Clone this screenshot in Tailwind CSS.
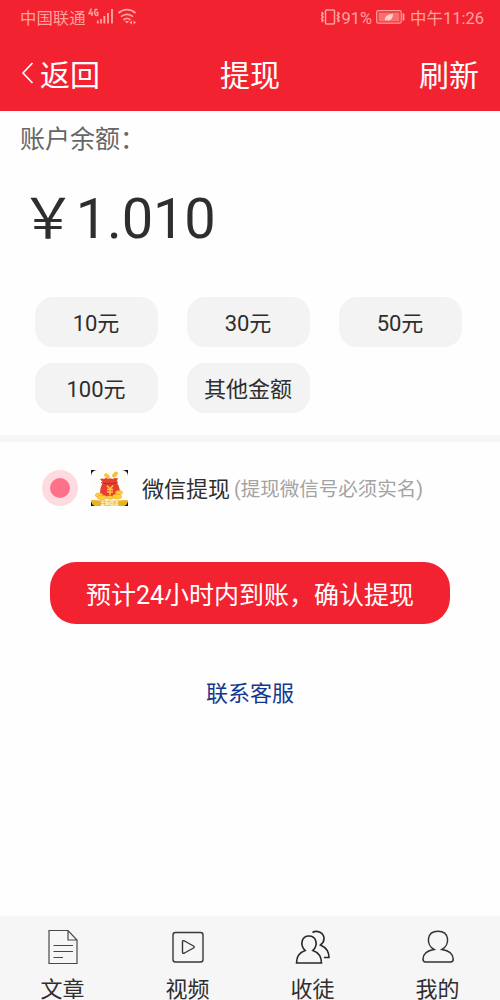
<!DOCTYPE html>
<html lang="zh-CN">
<head>
<meta charset="utf-8">
<meta name="viewport" content="width=device-width, initial-scale=1">
<title>提现</title>
<script src="https://cdn.jsdelivr.net/npm/@tailwindcss/browser@4"></script>
</head>
<body class="bg-[#fefefe] font-[Roboto,'Noto_Sans_CJK_SC',sans-serif] text-[#2e2e2e]">
<div class="flex h-[1000px] w-[500px] flex-col overflow-hidden whitespace-nowrap">
  <header class="h-[111px] shrink-0 bg-[#f32231] text-white">
    <div class="flex h-9 items-center pl-5 pr-4 text-base leading-9 text-[#ffa39d]">
      <span class="pt-px text-[16.4px]">中国联通</span>
      <svg class="ml-[2px] h-6 w-[52px] shrink-0" viewBox="0 0 52 24" fill="none" stroke="currentColor">
        <path d="M3.500 2.500L1 7.500h4.200M4 5.500V10M9.500 4Q6.700 2 6.700 6.200t3 3V6.500H8.200" stroke-width="1.500"/>
        <path d="M9.800 14.500v3M13 13v4.500M16.400 10v7.500M20 7v10.500M24 3v14.500" stroke-width="1.900"/>
        <path d="M30.500 7c5-4.500 12-4.500 17 0M33 10.700c3.500-3.200 8.500-3.200 12 0M35.500 14c2.200-2 4.800-2 7 0" stroke-width="1.800"/>
        <path d="M36.800 15h4.400L39 17.600z" fill="currentColor" stroke="none"/>
        <path d="M41.500 16.500l2.500-2v4zM48 16.500l-2.500-2v4z" fill="currentColor" stroke="none"/>
      </svg>
      <div class="flex-1"></div>
      <svg class="h-5 w-[22px]" viewBox="0 0 22 20" fill="none" stroke="currentColor" stroke-width="1.500">
        <rect x="4.500" y="2" width="9" height="14" rx="1"/>
        <path d="M.5 4L2 5.500.5 7.200 2 9 .5 10.700 2 12.500.5 14M16.500 4L18 5.500l-1.500 1.700L18 9l-1.500 1.700 1.500 1.800-1.500 1.500" stroke-width="1.700"/>
      </svg>
      <span class="-ml-px pt-px text-[16.4px]">91%</span>
      <svg class="ml-1 mr-[5px] h-5 w-[29px]" viewBox="0 0 29 20" fill="none">
        <rect x="0.700" y="2.700" width="24.500" height="12.500" rx="1.500" stroke="#ffa39d" stroke-width="1.200"/>
        <rect x="2.500" y="4.500" width="21" height="9" fill="#f9706f"/>
        <path d="M9 12.800c-.5-4 2-6.500 8-7 0 5-2.500 7.500-6.500 6.300z" fill="#ffd0cb"/>
        <path d="M27.500 5.500v7" stroke="#ffa39d" stroke-width="1.800"/>
      </svg>
      <span class="pt-px text-[16.400px] tracking-[0.05px]">中午11:26</span>
    </div>
    <nav class="grid h-[75px] grid-cols-3 items-center px-5 pt-[4px] text-[30px] leading-[44px]">
      <div class="flex items-center">
        <svg class="mr-[5px] h-6 w-[15px] -translate-y-[3px]" viewBox="0 0 15 24" fill="none" stroke="white" stroke-width="1.600"><path d="M12.500 2L3 12l9.500 10"/></svg>
        <span>返回</span>
      </div>
      <h1 class="text-center">提现</h1>
      <span class="pr-px text-right">刷新</span>
    </nav>
  </header>

  <main class="flex flex-1 flex-col">
    <p class="mt-[11px] pl-5 text-[25px] leading-9 text-[#666]">账户余额：</p>
    <p class="mt-[21px] pl-5 text-[56px] leading-[80px] tracking-[-0.2px]">￥1.010</p>
    <div class="mt-[38px] grid grid-cols-[repeat(3,123px)] gap-x-[29px] gap-y-4 pl-[34.500px] text-center text-[22px] leading-[54px]">
      <div class="h-[50px] rounded-[18px] bg-[#f3f3f3]">10元</div>
      <div class="h-[50px] rounded-[18px] bg-[#f3f3f3]">30元</div>
      <div class="h-[50px] rounded-[18px] bg-[#f3f3f3]">50元</div>
      <div class="h-[50px] rounded-[18px] bg-[#f3f3f3]">100元</div>
      <div class="h-[50px] rounded-[18px] bg-[#f3f3f3]">其他金额</div>
    </div>
    <div class="mt-[22px] h-[7px] bg-[#f6f6f6]"></div>
    <div class="mt-[28px] flex h-9 items-center pl-[42px]">
      <div class="flex size-9 items-center justify-center rounded-full bg-[#fddbe1]"><div class="size-5 rounded-full bg-[#ff7189]"></div></div>
      <svg class="ml-[13px] h-9 w-[37px]" viewBox="0 0 37 36">
        <rect width="37" height="36" fill="#111"/>
        <rect width="37" height="36" rx="6" fill="#fffdfa"/>
        <ellipse cx="16" cy="6" rx="3.200" ry="2" transform="rotate(40 16 6)" fill="#f7c332"/>
        <ellipse cx="24" cy="4.500" rx="3.500" ry="2" transform="rotate(-45 24 4.500)" fill="#f7c332"/>
        <path d="M9 9q2.500-1 4 0 2-2 4 0 2.500-1.500 4.500 0 2-1.500 5.500-.5l-1.500 3.500c3 4 4 9 3.500 14.500H9.500C8.500 21 9.500 16 12 12.500z" fill="#e5402f"/>
        <path d="M10 12.500q8 3 17-.5" fill="none" stroke="#b52822" stroke-width="1"/>
        <path d="M16 15.500l3 3.500 3-3.500M19 19v6M16 19.500h6M16 22h6" fill="none" stroke="#ffc83a" stroke-width="1.400"/>
        <g fill="#ffce3d" stroke="#ed981c" stroke-width=".5"><ellipse cx="8" cy="25" rx="3.800" ry="2"/><ellipse cx="11" cy="27.500" rx="4.500" ry="2.200"/><ellipse cx="19" cy="27.500" rx="3.500" ry="1.800"/><ellipse cx="26" cy="26.500" rx="4.500" ry="2.500"/><ellipse cx="28" cy="22.500" rx="3.500" ry="2"/></g>
        <path d="M0.500 30q18 1.500 36 0v1q0 5-5 5H5.500q-5 0-5-5z" fill="#e9b021"/>
        <text x="9.500" y="35" font-size="4.500" font-weight="700" font-family="Noto Sans CJK SC" fill="#fff8da">金种阅读</text>
      </svg>
      <span class="ml-[14px] pt-0.5 text-[22px]">微信提现</span>
      <span class="ml-1 pt-1 text-[19.500px] text-[#a3a3a3]">(提现微信号必须实名)</span>
    </div>
    <button class="mx-[50px] mt-14 h-[62px] rounded-[26px] bg-[#f32231] pt-[5px] text-[25px] text-white">预计24小时内到账，确认提现</button>
    <a class="mt-[54px] text-center text-[22px] leading-8 text-[#14378f]">联系客服</a>
  </main>

  <footer class="grid h-[84px] shrink-0 grid-cols-4 bg-[#f7f6f7] text-center text-[22px]">
    <div class="flex flex-col items-center pt-3">
      <svg class="h-[38px] w-10 shrink-0" viewBox="0 0 40 38" fill="none" stroke="#484848" stroke-width="1.200"><path d="M6 2.500h19l9 9.500v23.500H6zM25 2.500V12h9M10.500 17.500h19.500M10.500 23.500h19.500M10.500 29.500h9.500"/></svg>
      <span class="mt-2 leading-8">文章</span>
    </div>
    <div class="flex flex-col items-center pt-3">
      <svg class="h-[38px] w-10 shrink-0" viewBox="0 0 40 38" fill="none" stroke="#383838" stroke-width="1.400"><rect x="5" y="4.500" width="30" height="29.500" rx="2.500"/><path d="M14.500 14v10q0 2 2 1l9-5q1.500-1 0-2l-9-5q-2-1-2 1z"/></svg>
      <span class="mt-2 leading-8">视频</span>
    </div>
    <div class="flex flex-col items-center pt-3">
      <svg class="h-[38px] w-10 shrink-0" viewBox="0 0 40 38" fill="none" stroke="#282828" stroke-width="1.600"><path d="M12.200 22.500C6.500 17 8.500 8 16 8s9.500 9 3.800 14.500C25.500 24.500 28.500 28 28.500 35h-25c0-7 3-10.500 8.700-12.500z"/><path d="M19.500 4.500C24 1.500 31 5 31 10.500c0 3-1.500 5-3.500 6.500 5.500 2.500 8.500 6.500 8.500 12.500h-5"/></svg>
      <span class="mt-2 leading-8">收徒</span>
    </div>
    <div class="flex flex-col items-center pt-3">
      <svg class="h-[38px] w-10 shrink-0" viewBox="0 0 40 38" fill="none" stroke="#333" stroke-width="1.500"><path d="M16 21.500C8 17 8 3.200 20 3.200S32 17 24 21.500C30.500 22.500 35 26 35.200 31q0 3-2.500 3H7.500Q5 34 5 31c.2-5 4.500-8.500 11-9.500z"/></svg>
      <span class="mt-2 leading-8">我的</span>
    </div>
  </footer>
</div>
</body>
</html>
